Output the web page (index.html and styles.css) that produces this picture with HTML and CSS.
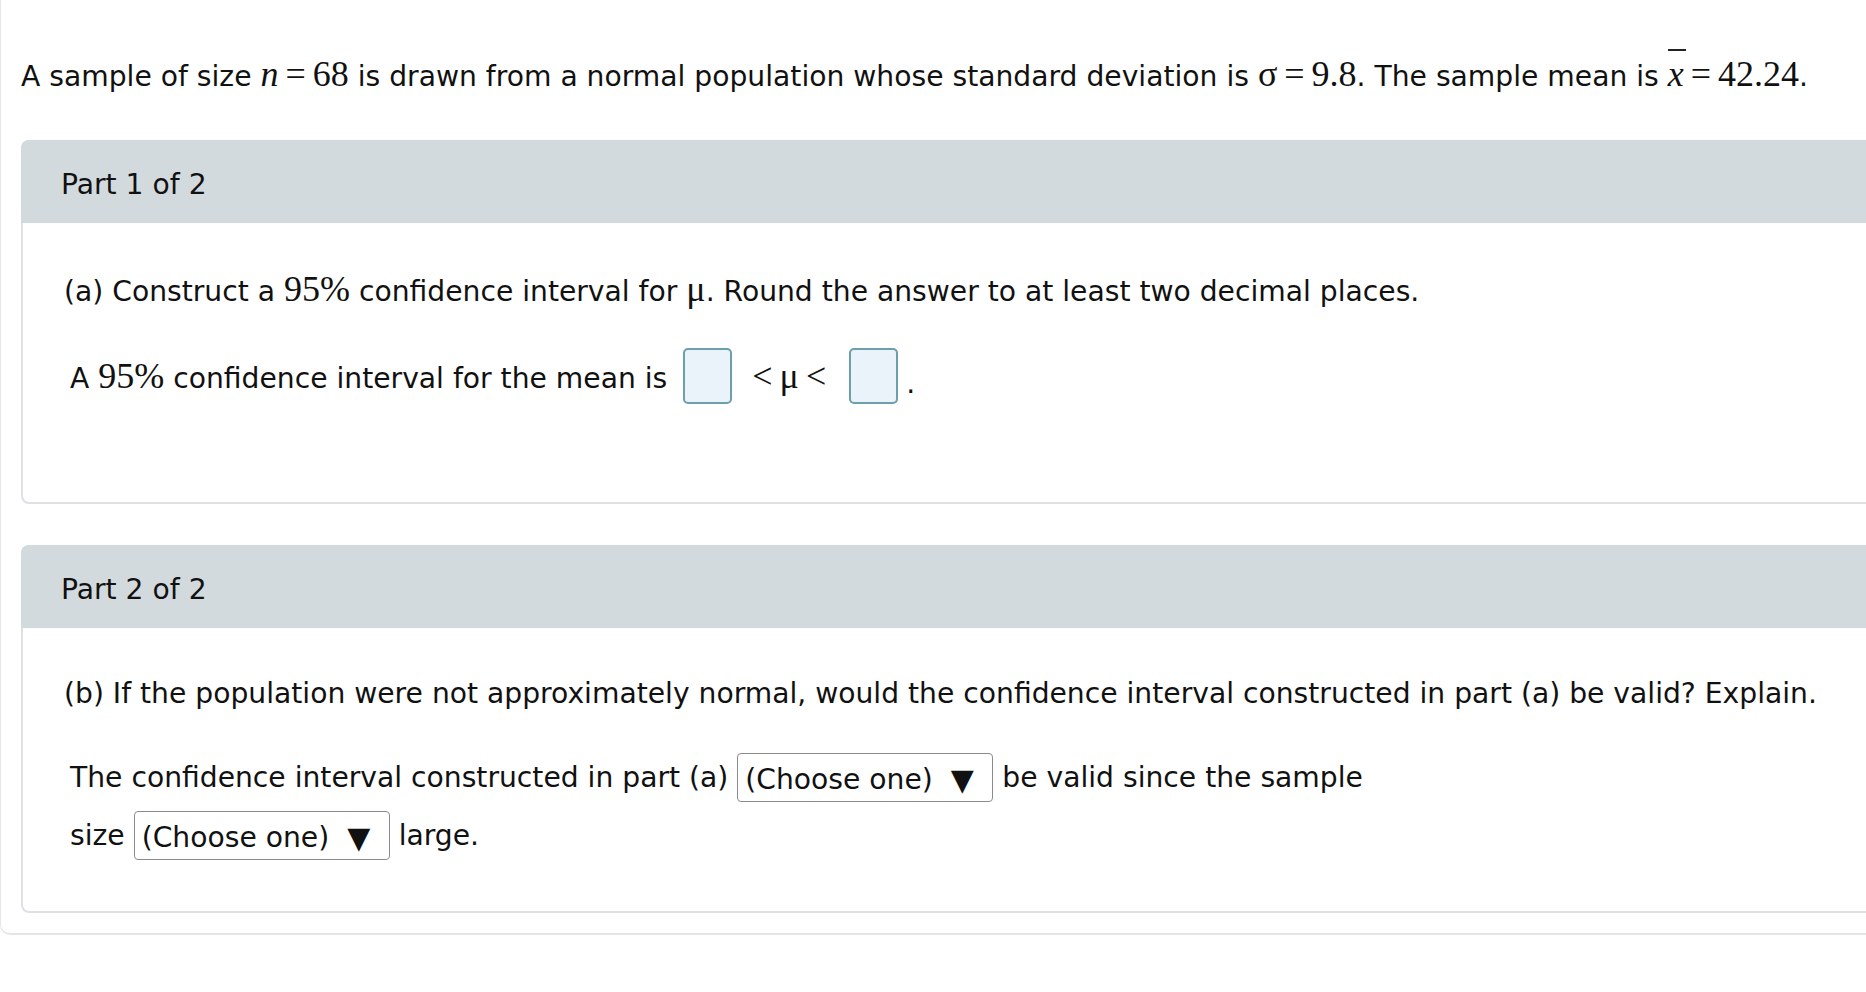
FILE: index.html
```html
<!DOCTYPE html>
<html lang="en">
<head>
<meta charset="utf-8">
<title>Confidence interval problem</title>
<link rel="stylesheet" href="styles.css">
</head>
<body>
<div class="page">
  <p class="intro">A sample of size <span class="m"><i>n</i><span class="op">=</span>68</span> is drawn from a normal population whose standard deviation is <span class="m">σ<span class="op">=</span>9.8</span>. The sample mean is <span class="m"><i class="xbar">x</i><span class="op">=</span>42.24</span>.</p>

  <section class="card">
    <div class="card-head">Part 1 of 2</div>
    <div class="card-body">
      <p class="question">(a) Construct a <span class="m">95%</span> confidence interval for <span class="m">μ</span>. Round the answer to at least two decimal places.</p>
      <div class="answer-row">
        <span>A <span class="m">95%</span> confidence interval for the mean is</span>
        <span class="box"></span>
        <span class="m rel">&lt;<span class="op">μ</span>&lt;</span>
        <span class="box"></span>
        <span class="dot">.</span>
      </div>
    </div>
  </section>

  <section class="card">
    <div class="card-head">Part 2 of 2</div>
    <div class="card-body body-b">
      <p class="question">(b) If the population were not approximately normal, would the confidence interval constructed in part (a) be valid? Explain.</p>
      <div class="answer-lines">
        <div class="line">The confidence interval constructed in part (a) <span class="choice">(Choose one)<span class="arrow">▼</span></span> be valid since the sample</div>
        <div class="line">size <span class="choice">(Choose one)<span class="arrow">▼</span></span> large.</div>
      </div>
    </div>
  </section>
</div>
</body>
</html>
```

FILE: styles.css
```css
html, body {
  margin: 0;
  padding: 0;
  background: #ffffff;
  overflow: hidden;
}

body {
  font-family: "DejaVu Sans", Verdana, sans-serif;
  font-size: 28.2px;
  color: #111111;
}

.page {
  width: 1866px;
  padding: 54px 0 20px 20px;
  border-left: 1px solid #e3e6e8;
  border-bottom: 2px solid #e3e6e8;
  border-bottom-left-radius: 10px;
  box-sizing: border-box;
}

.m {
  font-family: "Liberation Serif", "Times New Roman", serif;
  font-size: 36px;
}

.m i {
  font-style: italic;
}

.op {
  margin: 0 7px;
}

.xbar {
  position: relative;
}

.xbar::before {
  content: "";
  position: absolute;
  left: 0;
  right: -2px;
  top: -5px;
  border-top: 2px solid #222;
}

.intro {
  margin: 0 0 43px 0;
  line-height: 40px;
  white-space: nowrap;
}

.card {
  border: 2px solid #dde1e4;
  border-right: none;
  border-radius: 8px 0 0 8px;
  margin-bottom: 41px;
}

.card:last-child {
  margin-bottom: 0;
}

.card-head {
  background: #d3dade;
  height: 83px;
  line-height: 83px;
  padding: 3px 0 0 40px;
  box-sizing: border-box;
  margin: -2px 0 0 -2px;
  border-top-left-radius: 8px;
}

.card-body {
  padding: 46px 0 98px 41px;
}

.question {
  margin: 0;
  line-height: 40px;
  white-space: nowrap;
}

.answer-row {
  display: flex;
  align-items: center;
  height: 56px;
  margin: 36px 0 0 6px;
  white-space: nowrap;
}

.box {
  width: 45px;
  height: 52px;
  border: 2px solid #6c9fab;
  border-radius: 5px;
  background: #e9f3f9;
  margin-left: 16px;
}

.rel {
  margin: 0 7px 0 20px;
}

.rel .op {
  margin: 0 7px;
}

.dot {
  margin-left: 8px;
  align-self: flex-end;
  line-height: 40px;
}

.body-b {
  padding-bottom: 47px;
}

.answer-lines {
  margin: 34px 0 0 6px;
}

.line {
  display: flex;
  align-items: center;
  height: 58px;
  gap: 9px;
  white-space: nowrap;
}

.choice {
  display: inline-flex;
  align-items: center;
  width: 256px;
  height: 49px;
  box-sizing: border-box;
  padding: 4px 0 0 7px;
  border: 1px solid #8b8b8b;
  border-radius: 4px;
  background: #ffffff;
}

.arrow {
  font-size: 30px;
  margin-left: 18px;
}
```
